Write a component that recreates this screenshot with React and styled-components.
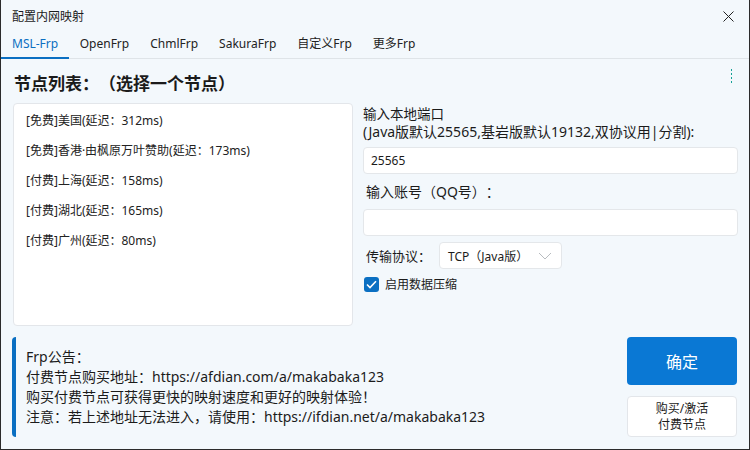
import styled, { createGlobalStyle } from 'styled-components';

const GlobalStyle = createGlobalStyle`
  html, body {
    margin: 0;
    padding: 0;
    background: #f3f8fc;
  }
  * { box-sizing: border-box; }
`

const Window = styled.div`
  position: relative;
  width: 750px;
  height: 450px;
  background: #f3f8fc;
  border: 1px solid #2b2b2b;
  border-top: none;
  font-family: "Noto Sans", "Noto Sans CJK SC", sans-serif;
  color: #1b1b1b;
  display: flex;
  flex-direction: column;
  overflow: hidden;
  text-spacing-trim: space-all;
`

const TitleBar = styled.div`
  height: 32px;
  display: flex;
  align-items: center;
  justify-content: space-between;
  padding: 0 14px 0 11px;
  font-size: 12px;
`

const CloseBtn = styled.div`
  width: 14px;
  height: 14px;
  display: flex;
  align-items: center;
  justify-content: center;
`

const Tabs = styled.div`
  height: 27px;
  display: flex;
  border-bottom: 1px solid #dfe4e8;
`

const Tab = styled.div`
  padding: 0 10.5px;
  font-size: 12px;
  line-height: 24px;
  color: ${p => (p.active ? '#0a6fc2' : '#222')};
  border-bottom: 2px solid ${p => (p.active ? '#0a6fc2' : 'transparent')};
  margin-bottom: -1px;
  &:first-child {
    padding: 0 11px;
  }
`

const Main = styled.div`
  padding: 0 12px;
`

const Heading = styled.div`
  font-size: 17px;
  font-weight: bold;
  line-height: 26px;
  margin: 12px 0 6px 1px;
`

const Columns = styled.div`
  display: grid;
  grid-template-columns: 340px 375px;
  column-gap: 10px;
`

const NodeList = styled.div`
  height: 223px;
  background: #fff;
  border: 1px solid #e3e6ea;
  border-radius: 4px;
  padding: 2px 12px;
`

const NodeItem = styled.div`
  font-size: 12px;
  line-height: 30px;
  color: #222;
`

const Side = styled.div`
  display: flex;
  flex-direction: column;
  padding-top: 2px;
`

const Label = styled.div`
  font-size: ${p => p.size || 14}px;
  line-height: 18px;
  margin-left: ${p => p.indent || 0}px;
  margin-top: ${p => p.mt || 0}px;
`

const Input = styled.div`
  height: 27px;
  margin-top: ${p => p.mt}px;
  background: #fff;
  border: 1px solid #e4e7ea;
  border-radius: 4px;
  font-size: 12px;
  line-height: 25px;
  padding: 0 7px;
`

const ProtoRow = styled.div`
  display: flex;
  align-items: center;
  gap: 8px;
  margin-top: 6px;
  padding-left: 3px;
`

const Select = styled.div`
  width: 123px;
  height: 27px;
  background: #fff;
  border: 1px solid #e4e7ea;
  border-radius: 4px;
  display: flex;
  align-items: center;
  justify-content: space-between;
  padding: 0 9px 0 8px;
  font-size: 12px;
`

const CheckRow = styled.div`
  display: flex;
  align-items: center;
  gap: 6px;
  margin-top: 6px;
  font-size: 12px;
  padding-left: 1px;
`

const CheckBox = styled.div`
  width: 15px;
  height: 15px;
  border-radius: 3px;
  background: #0a6fc2;
  display: flex;
  align-items: center;
  justify-content: center;
`

const Bottom = styled.div`
  display: flex;
  justify-content: space-between;
  padding: 0 12px 0 11px;
  margin-top: 11px;
`

const Notice = styled.div`
  width: 588px;
  height: 100px;
  border-left: 4px solid #0a6fc2;
  border-radius: 4px;
  padding: 10px;
  font-size: 14px;
  line-height: 20px;
  color: #1b1b1b;
`

const Buttons = styled.div`
  display: flex;
  flex-direction: column;
  gap: 11px;
  width: 110px;
`

const PrimaryButton = styled.div`
  height: 48px;
  background: #0a78d4;
  border-radius: 4px;
  color: #fff;
  font-size: 16px;
  display: flex;
  align-items: center;
  justify-content: center;
`

const SecondaryButton = styled.div`
  height: 41px;
  background: #fff;
  border: 1px solid #e3e6ea;
  border-radius: 4px;
  font-size: 12px;
  line-height: 16px;
  display: flex;
  align-items: center;
  justify-content: center;
  text-align: center;
`

const Dots = styled.div`
  position: absolute;
  right: 17px;
  top: 69px;
  display: flex;
  flex-direction: column;
  gap: 2px;
  span {
    width: 1px;
    height: 2px;
    background: #14a196;
  }
`

const nodes = [
  '[免费]美国(延迟：312ms)',
  '[免费]香港·由枫原万叶赞助(延迟：173ms)',
  '[付费]上海(延迟：158ms)',
  '[付费]湖北(延迟：165ms)',
  '[付费]广州(延迟：80ms)',
]

const tabs = ['MSL-Frp', 'OpenFrp', 'ChmlFrp', 'SakuraFrp', '自定义Frp', '更多Frp']

const App = () => {
  return (
    <>
      <GlobalStyle />
      <Window>
        <TitleBar>
          <span>配置内网映射</span>
          <CloseBtn>
            <svg width="11" height="11" viewBox="0 0 11 11">
              <path d="M0.5 0.5 L10.5 10.5 M10.5 0.5 L0.5 10.5" stroke="#222" strokeWidth="1" />
            </svg>
          </CloseBtn>
        </TitleBar>
        <Tabs>
          {tabs.map((t, i) => (
            <Tab key={t} active={i === 0}>{t}</Tab>
          ))}
        </Tabs>
        <Dots><span /><span /><span /><span /></Dots>
        <Main>
          <Heading>节点列表：（选择一个节点）</Heading>
          <Columns>
            <NodeList>
              {nodes.map(n => (
                <NodeItem key={n}>{n}</NodeItem>
              ))}
            </NodeList>
            <Side>
              <Label size={13.5}>输入本地端口</Label>
              <Label>(Java版默认25565,基岩版默认19132,双协议用|分割):</Label>
              <Input mt={6}>25565</Input>
              <Label indent={3} mt={9}>输入账号（QQ号）：</Label>
              <Input mt={8} />
              <ProtoRow>
                <Label size={13}>传输协议：</Label>
                <Select>
                  <span>TCP（Java版）</span>
                  <svg width="14" height="8" viewBox="0 0 14 8">
                    <path d="M1 1 L7 7 L13 1" fill="none" stroke="#b8bcc0" strokeWidth="1" />
                  </svg>
                </Select>
              </ProtoRow>
              <CheckRow>
                <CheckBox>
                  <svg width="11" height="9" viewBox="0 0 11 9">
                    <path d="M1 4.5 L4 7.5 L10 1.2" fill="none" stroke="#fff" strokeWidth="1.6" />
                  </svg>
                </CheckBox>
                <span>启用数据压缩</span>
              </CheckRow>
            </Side>
          </Columns>
        </Main>
        <Bottom>
          <Notice>
            Frp公告：<br />
            付费节点购买地址：https://afdian.com/a/makabaka123<br />
            购买付费节点可获得更快的映射速度和更好的映射体验！<br />
            注意：若上述地址无法进入，请使用：https://ifdian.net/a/makabaka123
          </Notice>
          <Buttons>
            <PrimaryButton>确定</PrimaryButton>
            <SecondaryButton>购买/激活<br />付费节点</SecondaryButton>
          </Buttons>
        </Bottom>
      </Window>
    </>
  );
};

export default App;
